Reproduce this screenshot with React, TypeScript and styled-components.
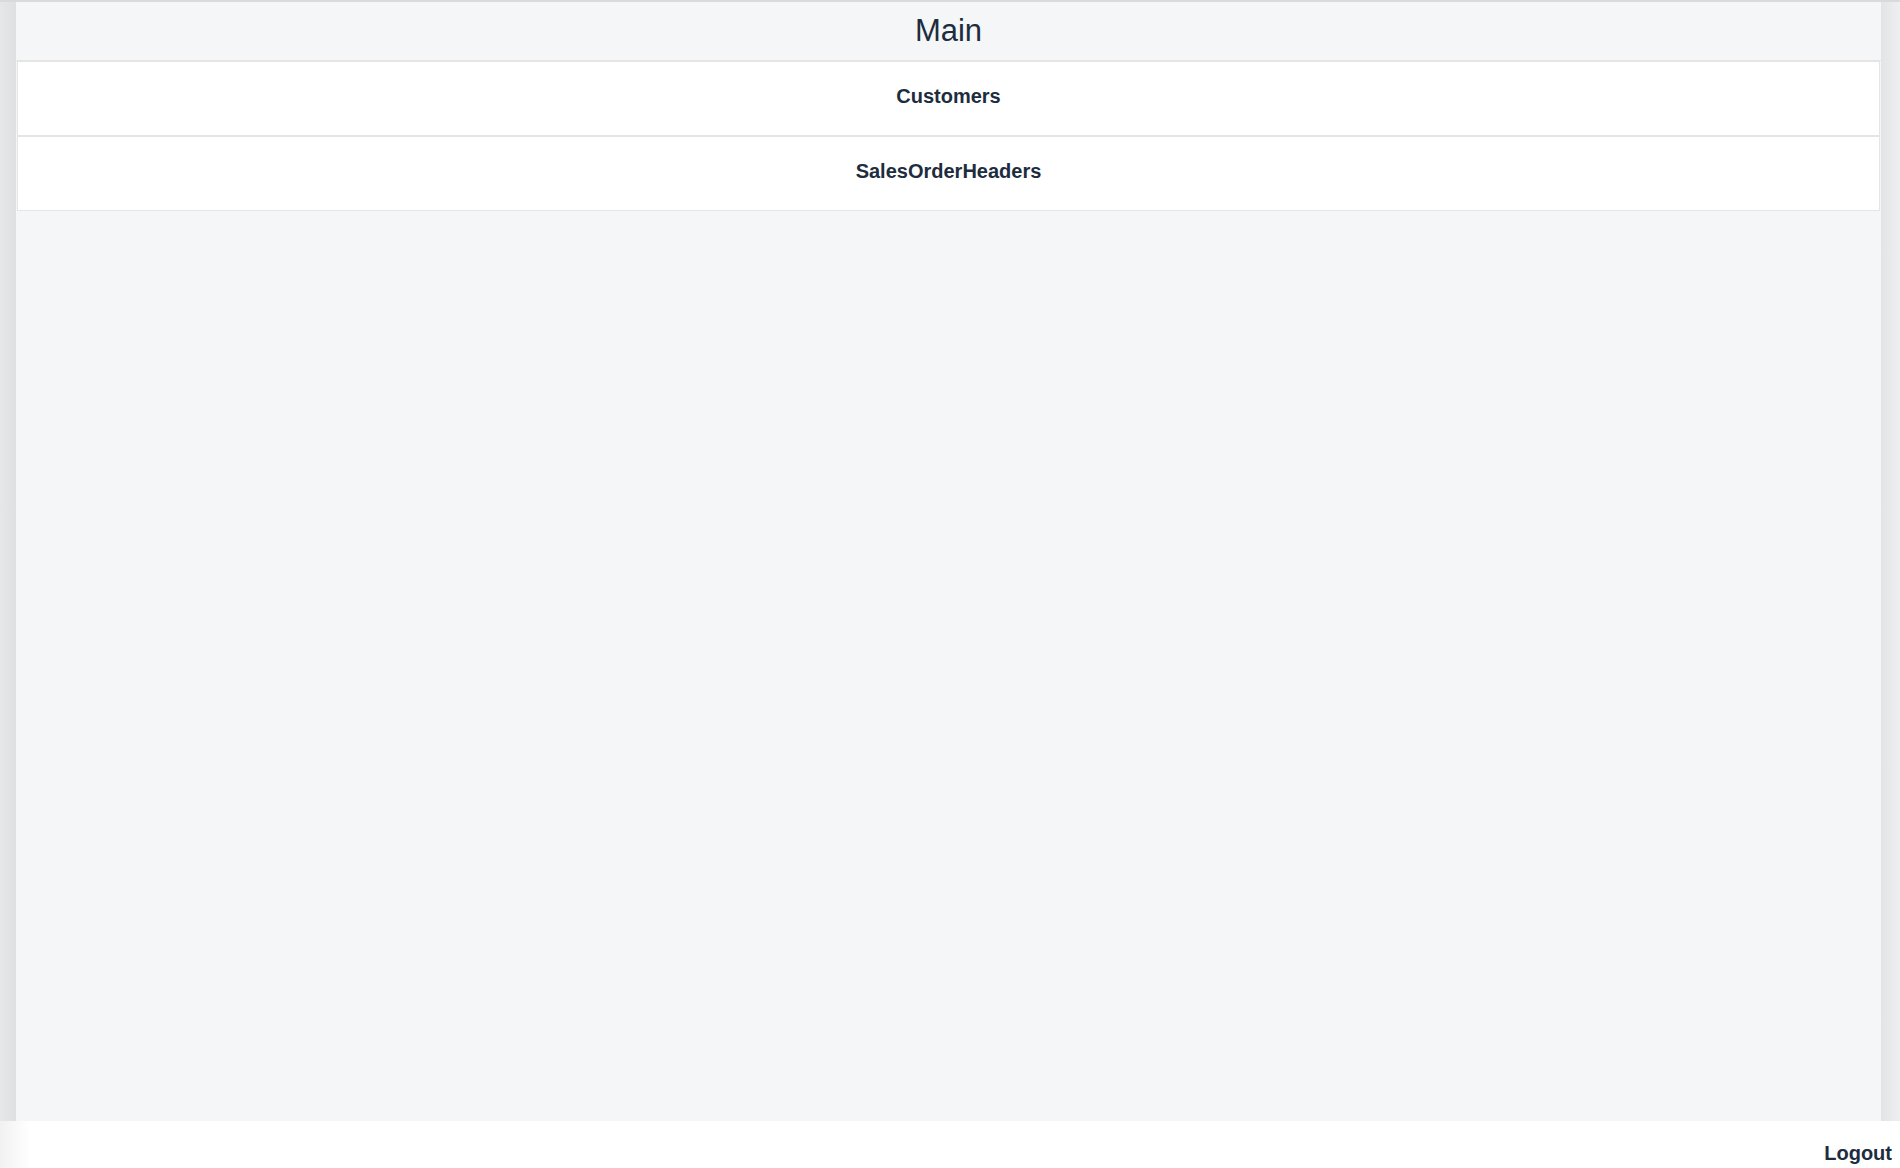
import React from "react";
import styled, { createGlobalStyle } from "styled-components";

const GlobalStyle = createGlobalStyle`
  html, body {
    margin: 0;
    padding: 0;
    height: 100%;
    background: #ffffff;
    font-family: "Liberation Sans", Arial, sans-serif;
    color: #1d2d3e;
  }
  #root {
    height: 100%;
  }
  * {
    box-sizing: border-box;
  }
`;

const Page = styled.div`
  display: flex;
  flex-direction: column;
  height: 100vh;
  border-top: 2px solid #d9dadc;
`;

const Shell = styled.div`
  flex: 1;
  display: flex;
  min-height: 0;
`;

const LeftGutter = styled.div`
  width: 16px;
  background: linear-gradient(to right, #e6e7e8, #dfe0e1);
`;

const RightGutter = styled.div`
  width: 19px;
  background: linear-gradient(to right, #e3e4e5, #eeeff0);
`;

const Content = styled.main`
  flex: 1;
  display: flex;
  flex-direction: column;
  background: #f5f6f7;
`;

const Header = styled.header`
  height: 59px;
  display: flex;
  align-items: center;
  justify-content: center;
  border-bottom: 1px solid #e5e5e5;
  font-size: 31px;
  font-weight: 400;
  color: #1d2d3e;
`;

const List = styled.nav`
  display: flex;
  flex-direction: column;
  padding: 0 1px;
`;

const Row = styled.button`
  height: 75px;
  display: flex;
  align-items: center;
  justify-content: center;
  padding: 0 0 4px;
  background: #ffffff;
  border: 1px solid #e5e5e5;
  font-family: "Liberation Sans", Arial, sans-serif;
  font-size: 20px;
  font-weight: 700;
  color: #1d2d3e;
  cursor: pointer;
`;

const Footer = styled.footer`
  height: 47px;
  display: flex;
  justify-content: flex-end;
  align-items: flex-start;
  padding: 21px 8px 0 0;
  background: linear-gradient(to right, #f1f1f1 0px, #ffffff 30px);
`;

const Logout = styled.span`
  font-size: 20px;
  font-weight: 700;
  line-height: 23px;
  color: #1d2d3e;
  cursor: pointer;
`;

const items = ["Customers", "SalesOrderHeaders"];

export default function App() {
  return (
    <>
      <GlobalStyle />
      <Page>
        <Shell>
          <LeftGutter />
          <Content>
            <Header>Main</Header>
            <List>
              {items.map((name) => (
                <Row key={name}>{name}</Row>
              ))}
            </List>
          </Content>
          <RightGutter />
        </Shell>
        <Footer>
          <Logout>Logout</Logout>
        </Footer>
      </Page>
    </>
  );
}
